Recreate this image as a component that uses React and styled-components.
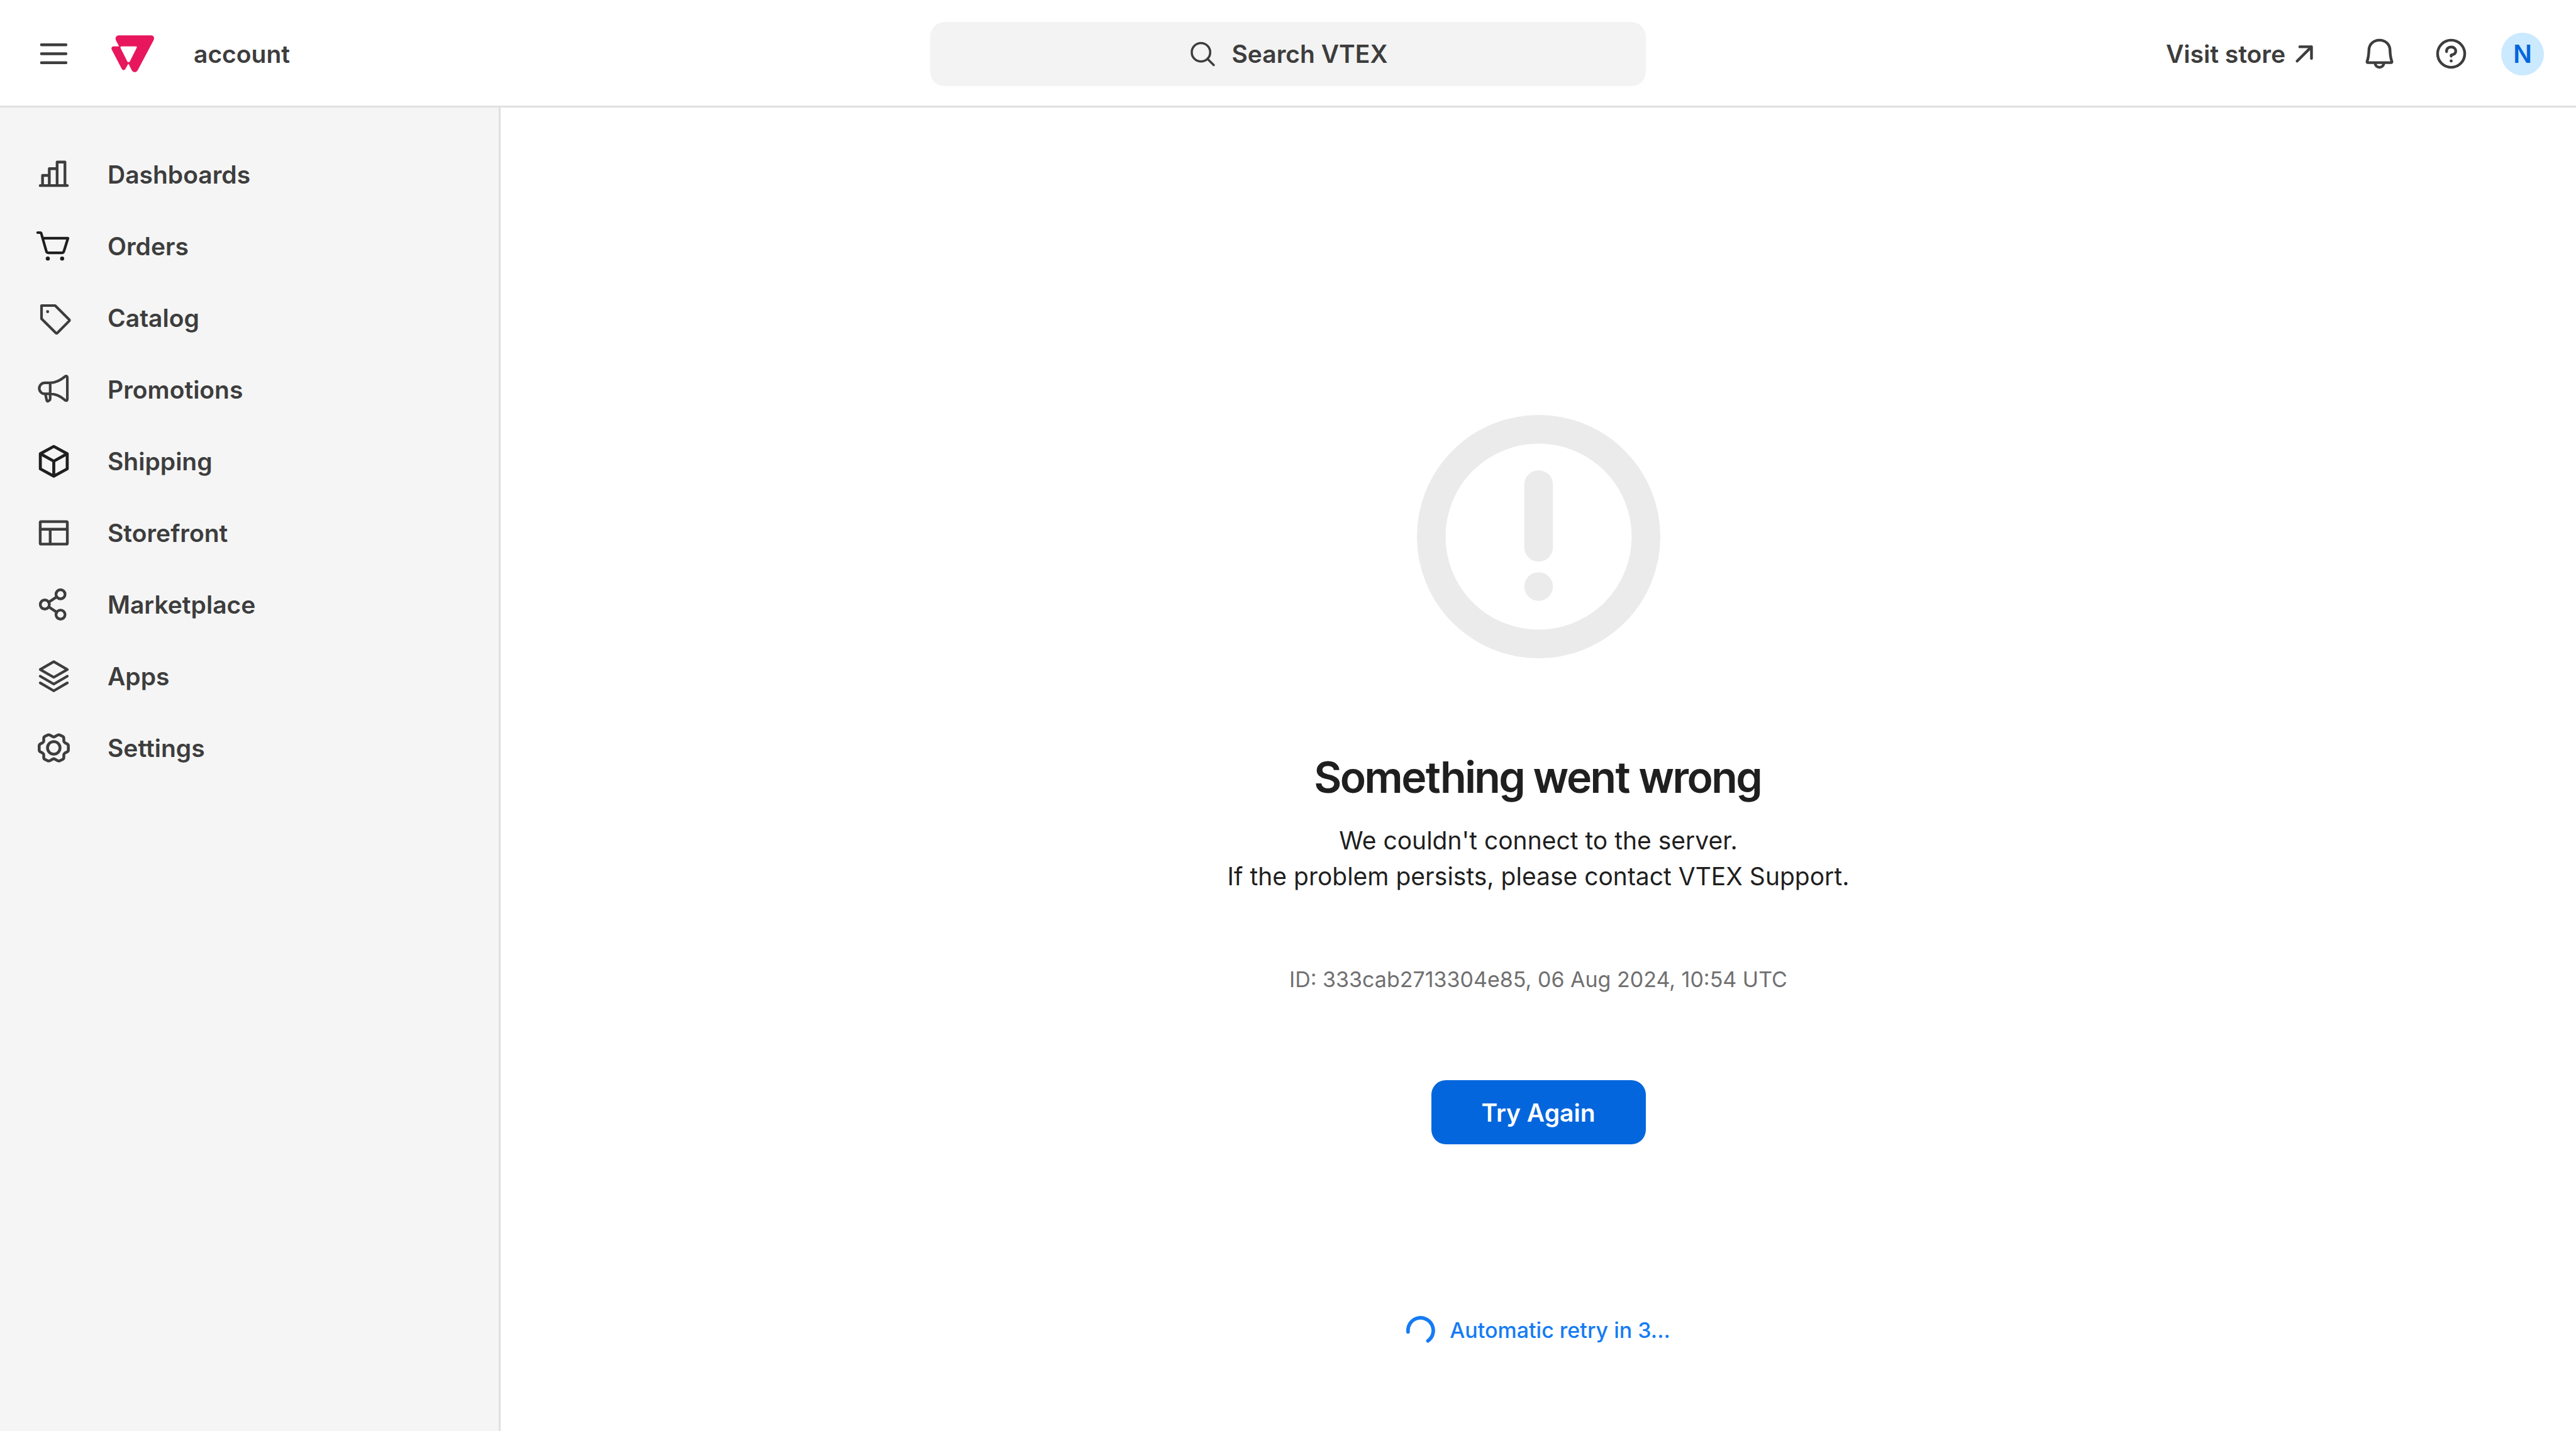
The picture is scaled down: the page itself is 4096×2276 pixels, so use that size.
import React from 'react';
import styled, { createGlobalStyle } from 'styled-components';

const color = {
  text: '#3d3d3d',
  strong: '#1f1f1f',
  soft: '#707070',
  border: '#e0e0e0',
  panel: '#f5f5f5',
  field: '#f3f3f3',
  muted: '#ebebeb',
  accent: '#0366dd',
  accentSoft: '#cbe9ff',
  link: '#157bf4',
  brand: '#e8175d',
};

const GlobalStyle = createGlobalStyle`
  *, *::before, *::after { box-sizing: border-box; }
  body {
    margin: 0;
    background: #fff;
    color: ${color.text};
    font-family: Inter, "Liberation Sans", sans-serif;
    font-size: 39px;
    line-height: 57px;
  }
  button {
    margin: 0;
    padding: 0;
    border: 0;
    background: none;
    color: inherit;
    font: inherit;
    cursor: pointer;
  }
  a { color: inherit; text-decoration: none; }
`;

const Page = styled.div`
  display: flex;
  flex-direction: column;
  min-height: 100vh;
`;

const Header = styled.header`
  display: grid;
  grid-template-columns: 1fr auto 1fr;
  align-items: center;
  height: 171px;
  padding: 0 51px;
  box-shadow: inset 0 -3px 0 ${color.border};
  font-weight: 600;
`;

const Brand = styled.div`
  display: flex;
  align-items: center;
  gap: 63px;
  padding-left: 6px;
`;

const IconButton = styled.button`
  display: flex;
  align-items: center;
  justify-content: center;
`;

const SearchButton = styled.button`
  display: flex;
  align-items: center;
  justify-content: center;
  gap: 23px;
  width: 1138px;
  height: 102px;
  border-radius: 23px;
  background: ${color.field};
  font-weight: 600;
`;

const Tools = styled.div`
  display: flex;
  align-items: center;
  justify-content: flex-end;
  gap: 57px;
`;

const StoreLink = styled.a`
  display: flex;
  align-items: center;
  gap: 7px;
  margin-right: 11px;
`;

const Account = styled.div`
  display: flex;
  align-items: center;
  gap: 51px;
`;

const Avatar = styled.button`
  width: 68px;
  height: 68px;
  border-radius: 50%;
  background: ${color.accentSoft};
  color: ${color.accent};
  font-weight: 600;
`;

const Body = styled.div`
  display: flex;
  flex: 1;
`;

const Sidebar = styled.nav`
  flex: none;
  width: 796px;
  padding-top: 49px;
  border-right: 3px solid ${color.border};
  background: ${color.panel};
`;

const Menu = styled.ul`
  margin: 0;
  padding: 0;
  list-style: none;
`;

const MenuLink = styled.a`
  display: flex;
  align-items: center;
  gap: 57px;
  height: 114px;
  padding: 0 57px;
  font-weight: 600;
`;

const Main = styled.main`
  display: flex;
  flex: 1;
  flex-direction: column;
  align-items: center;
  padding-top: 489px;
  color: ${color.strong};
  text-align: center;
`;

const Title = styled.h1`
  margin: 149px 0 32px;
  font-family: "Inter Tight", Inter, "Liberation Sans", sans-serif;
  font-size: 68px;
  font-weight: 600;
  line-height: 80px;
`;

const Message = styled.p`
  margin: 0;
`;

const Details = styled.p`
  margin: 107px 0 132px;
  color: ${color.soft};
  font-size: 34px;
`;

const RetryButton = styled.button`
  width: 341px;
  height: 102px;
  border-radius: 23px;
  background: ${color.accent};
  color: #fff;
  font-weight: 600;
`;

const RetryStatus = styled.p`
  display: flex;
  align-items: center;
  gap: 23px;
  margin: 267px 0 0;
  color: ${color.link};
  font-size: 34px;
  font-weight: 500;
`;

const Svg = styled.svg`
  display: block;
  flex: none;
  width: ${(p) => p.$size}px;
  height: ${(p) => p.$size}px;
  fill: none;
  stroke: ${(p) => p.$tone || color.text};
  stroke-width: ${(p) => p.$weight || 4.6};
  stroke-linecap: round;
  stroke-linejoin: round;
`;

const LogoSvg = styled.svg`
  display: block;
  width: 68px;
  height: 59px;
  fill: ${color.brand};
`;

const Icon = ({ box = 60, size = 57, tone, weight, children }) => (
  <Svg viewBox={`0 0 ${box} ${box}`} $size={size} $tone={tone} $weight={weight} aria-hidden="true">
    {children}
  </Svg>
);

const Dot = ({ x, y, r, tone = color.text }) => (
  <circle cx={x} cy={y} r={r} fill={tone} stroke="none" />
);

const Logo = () => (
  <LogoSvg viewBox="186 59 72 62" role="img" aria-label="VTEX">
    <path
      fillRule="evenodd"
      d="M198 59H253Q256.4 59 257.6 62Q258.5 64.5 257.3 67L231 116.800Q228.800 121 225.400 121Q222 121 220 117L215.300 107.500Q214.700 106.600 214.200 107.500L210 115.200Q208.800 117.600 206.700 117.600Q204.600 117.600 203.400 115.200L186.900 83.500Q185.500 80.800 187 78.800Q188 77.600 190 77.600H198.600Q199 77.600 198.800 77L194.200 68.300Q192.300 64.800 193.800 61.700Q195.200 59 198 59ZM203 77.600H227.500Q229.600 77.800 228.700 80L217.200 103Q216.800 104 216 104H214.100Q213.300 104 212.900 103L201.500 80.200Q200.800 77.900 203 77.600Z"
    />
  </LogoSvg>
);

const icons = {
  dashboards: (
    <Icon>
      <path d="M7.3 48.6H52.7M11.2 48.6V31.6H22.5M22.5 48.6V20.2H35.6M35.6 48.6V9.2H48.7V48.6" />
    </Icon>
  ),
  orders: (
    <Icon tone={color.strong} weight={4.4}>
      <path d="M3 7.4H8L8.9 8.2L17.6 38.7Q18.3 41.1 20.8 41.1H43.7Q46.1 41.1 46.9 38.7L53.8 16.8H11.3" />
      <Dot x={20} y={50.7} r={3.4} tone={color.strong} />
      <Dot x={44} y={50.7} r={3.4} tone={color.strong} />
    </Icon>
  ),
  catalog: (
    <Icon weight={4.4}>
      <path d="M9.5 9.5H32.3L55.7 32.8Q56.9 34.1 55.7 35.4L36 55.2Q34.7 56.5 33.4 55.2L9.5 31.5Z" />
      <Dot x={19.7} y={19.7} r={2.5} />
    </Icon>
  ),
  promotions: (
    <Icon weight={4.4}>
      <path d="M24 18.8H15A9.2 9.2 0 0 0 15 37.3H24C33 37.3 42 42 48.8 47.7C50.8 49.3 52.7 48.6 52.7 46.4V9.7C52.7 7.5 50.8 6.7 48.8 8.3C42 14 33 18.8 24 18.8V45.4Q24 47.3 22.6 48.2L20.8 49.3Q18.8 50.4 18.2 48L16 38" />
    </Icon>
  ),
  shipping: (
    <Icon tone={color.strong} weight={5}>
      <path d="M30 5.3L52.5 17.5V42.9L30 55.1L7.5 42.9V17.5ZM7.5 17.5L30 30L52.5 17.5M30 30V55.1" />
    </Icon>
  ),
  storefront: (
    <Icon>
      <rect x="7.3" y="11.2" width="45.4" height="37.6" rx="1.5" />
      <path d="M7.3 24H52.7M24 24V48.8" />
    </Icon>
  ),
  marketplace: (
    <Icon>
      <circle cx="15" cy="30" r="7.6" />
      <circle cx="41.3" cy="12.9" r="7.6" />
      <circle cx="41.3" cy="46.9" r="7.6" />
      <path d="M21.6 26.1L34.8 17.3M21.6 33.9L34.8 42.7" />
    </Icon>
  ),
  apps: (
    <Icon weight={4.4}>
      <path d="M30 5.7L52.7 18.8L30 31.8L7.3 18.8ZM7.3 30L30 43.2L52.7 30M7.3 41.2L30 54.5L52.7 41.2" />
    </Icon>
  ),
  settings: (
    <Icon weight={4.8}>
      <circle cx="30" cy="30" r="10.5" />
      <path d="M31.5 11.4L36 8.8Q38 7.6 40 8.4L45 10.8Q46.8 11.8 46.8 14V18.4Q46.8 20.2 48.5 21.2L52.6 23.4Q54.4 24.4 54.4 26.6V33.4Q54.4 35.6 52.6 36.6L48.5 38.8Q46.8 39.8 46.8 41.6V46Q46.8 48.200 45 49.200L40 51.600Q38 52.4 36 51.200L31.5 48.600Q30 47.800 28.5 48.600L24 51.200Q22 52.4 20 51.600L15 49.200Q13.200 48.200 13.200 46V41.6Q13.200 39.8 11.5 38.8L7.4 36.6Q5.6 35.6 5.6 33.4V26.6Q5.6 24.4 7.4 23.4L11.5 21.2Q13.200 20.2 13.200 18.4V14Q13.200 11.8 15 10.8L20 8.4Q22 7.6 24 8.8L28.5 11.4Q30 12.200 31.5 11.4Z" />
    </Icon>
  ),
};

const menu = [
  ['dashboards', 'Dashboards'],
  ['orders', 'Orders'],
  ['catalog', 'Catalog'],
  ['promotions', 'Promotions'],
  ['shipping', 'Shipping'],
  ['storefront', 'Storefront'],
  ['marketplace', 'Marketplace'],
  ['apps', 'Apps'],
  ['settings', 'Settings'],
];

const TopBar = () => (
  <Header>
    <Brand>
      <IconButton type="button" aria-label="Toggle menu">
        <Icon>
          <path d="M9.3 15H50.5M9.3 30H50.5M9.3 45H50.5" />
        </Icon>
      </IconButton>
      <Logo />
      <span>account</span>
    </Brand>
    <SearchButton type="button">
      <Icon box={48} size={46} weight={3.7}>
        <circle cx="21.5" cy="21" r="15.3" />
        <path d="M32.5 32L42.7 42.2" />
      </Icon>
      Search VTEX
    </SearchButton>
    <Tools>
      <StoreLink href="#store">
        Visit store
        <Icon box={48} size={46}>
          <path d="M12 35.7L35.9 11.9M16.5 11.9H35.9V31.2" />
        </Icon>
      </StoreLink>
      <IconButton type="button" aria-label="Notifications">
        <Icon>
          <path d="M10.5 44.8H49.5Q51.3 44.4 50.7 42.6C48.5 37 47.9 31 47.6 23.5C47.3 13.5 39.5 7.3 30 7.3S12.7 13.5 12.4 23.5C12.1 31 11.5 37 9.3 42.6Q8.7 44.4 10.5 44.8ZM22.6 45.5C23 50 26 52.7 30 52.7S37 50 37.4 45.5" />
        </Icon>
      </IconButton>
      <Account>
        <IconButton type="button" aria-label="Help">
          <Icon>
            <circle cx="30" cy="30" r="22.7" />
            <path d="M22.3 26.5C22 21.5 25.4 18.7 30 18.7S37.7 21.6 37.7 25.8C37.7 30.5 33.5 31.6 30 32.3V34" />
            <Dot x={30} y={42} r={2.5} />
          </Icon>
        </IconButton>
        <Avatar type="button" aria-label="N, your profile">N</Avatar>
      </Account>
    </Tools>
  </Header>
);

const SideMenu = () => (
  <Sidebar aria-label="Main">
    <Menu>
      {menu.map(([id, label]) => (
        <li key={id}>
          <MenuLink href={`#${id}`}>
            {icons[id]}
            {label}
          </MenuLink>
        </li>
      ))}
    </Menu>
  </Sidebar>
);

export default function App() {
  return (
    <Page>
      <GlobalStyle />
      <TopBar />
      <Body>
        <SideMenu />
        <Main>
          <Icon box={408} size={387} tone={color.muted} weight={48}>
            <circle cx="204" cy="204" r="180" />
            <path d="M204 116.7V222" />
            <Dot x={204} y={287.7} r={24} tone={color.muted} />
          </Icon>
          <Title>Something went wrong</Title>
          <Message>
            We couldn't connect to the server.
            <br />
            If the problem persists, please contact VTEX Support.
          </Message>
          <Details>ID: 333cab2713304e85, 06 Aug 2024, 10:54 UTC</Details>
          <RetryButton type="button">Try Again</RetryButton>
          <RetryStatus role="status">
            <Icon box={48} size={46} tone={color.link} weight={6}>
              <path d="M3 26.5A21 21 0 1 1 36 41.3" />
            </Icon>
            Automatic retry in 3...
          </RetryStatus>
        </Main>
      </Body>
    </Page>
  );
}
